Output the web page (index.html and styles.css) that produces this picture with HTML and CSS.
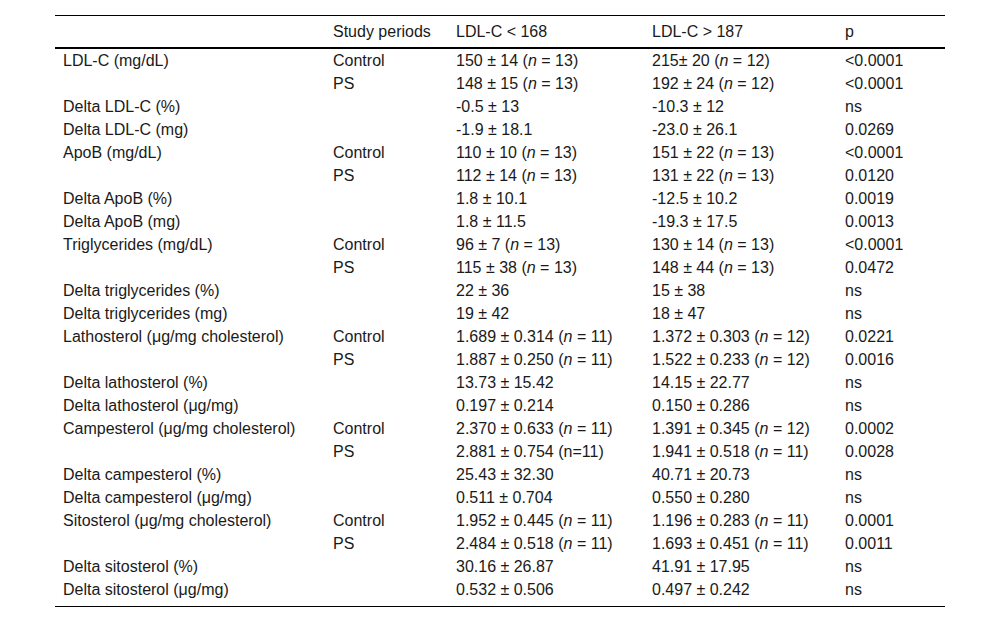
FILE: index.html
```html
<!DOCTYPE html>
<html>
<head>
<meta charset="utf-8">
<link rel="stylesheet" href="styles.css">
</head>
<body>
<table class="data">
<colgroup>
<col class="c1"><col class="c2"><col class="c3"><col class="c4"><col class="c5">
</colgroup>
<thead>
<tr><th></th><th>Study periods</th><th>LDL-C &lt; 168</th><th>LDL-C &gt; 187</th><th>p</th></tr>
</thead>
<tbody>
<tr><td>LDL-C (mg/dL)</td><td>Control</td><td>150 ± 14 (<i>n</i> = 13)</td><td>215± 20 (<i>n</i> = 12)</td><td>&lt;0.0001</td></tr>
<tr><td></td><td>PS</td><td>148 ± 15 (<i>n</i> = 13)</td><td>192 ± 24 (<i>n</i> = 12)</td><td>&lt;0.0001</td></tr>
<tr><td>Delta LDL-C (%)</td><td></td><td>-0.5 ± 13</td><td>-10.3 ± 12</td><td>ns</td></tr>
<tr><td>Delta LDL-C (mg)</td><td></td><td>-1.9 ± 18.1</td><td>-23.0 ± 26.1</td><td>0.0269</td></tr>
<tr><td>ApoB (mg/dL)</td><td>Control</td><td>110 ± 10 (<i>n</i> = 13)</td><td>151 ± 22 (<i>n</i> = 13)</td><td>&lt;0.0001</td></tr>
<tr><td></td><td>PS</td><td>112 ± 14 (<i>n</i> = 13)</td><td>131 ± 22 (<i>n</i> = 13)</td><td>0.0120</td></tr>
<tr><td>Delta ApoB (%)</td><td></td><td>1.8 ± 10.1</td><td>-12.5 ± 10.2</td><td>0.0019</td></tr>
<tr><td>Delta ApoB (mg)</td><td></td><td>1.8 ± 11.5</td><td>-19.3 ± 17.5</td><td>0.0013</td></tr>
<tr><td>Triglycerides (mg/dL)</td><td>Control</td><td>96 ± 7 (<i>n</i> = 13)</td><td>130 ± 14 (<i>n</i> = 13)</td><td>&lt;0.0001</td></tr>
<tr><td></td><td>PS</td><td>115 ± 38 (<i>n</i> = 13)</td><td>148 ± 44 (<i>n</i> = 13)</td><td>0.0472</td></tr>
<tr><td>Delta triglycerides (%)</td><td></td><td>22 ± 36</td><td>15 ± 38</td><td>ns</td></tr>
<tr><td>Delta triglycerides (mg)</td><td></td><td>19 ± 42</td><td>18 ± 47</td><td>ns</td></tr>
<tr><td>Lathosterol (μg/mg cholesterol)</td><td>Control</td><td>1.689 ± 0.314 (<i>n</i> = 11)</td><td>1.372 ± 0.303 (<i>n</i> = 12)</td><td>0.0221</td></tr>
<tr><td></td><td>PS</td><td>1.887 ± 0.250 (<i>n</i> = 11)</td><td>1.522 ± 0.233 (<i>n</i> = 12)</td><td>0.0016</td></tr>
<tr><td>Delta lathosterol (%)</td><td></td><td>13.73 ± 15.42</td><td>14.15 ± 22.77</td><td>ns</td></tr>
<tr><td>Delta lathosterol (μg/mg)</td><td></td><td>0.197 ± 0.214</td><td>0.150 ± 0.286</td><td>ns</td></tr>
<tr><td>Campesterol (μg/mg cholesterol)</td><td>Control</td><td>2.370 ± 0.633 (<i>n</i> = 11)</td><td>1.391 ± 0.345 (<i>n</i> = 12)</td><td>0.0002</td></tr>
<tr><td></td><td>PS</td><td>2.881 ± 0.754 (n=11)</td><td>1.941 ± 0.518 (<i>n</i> = 11)</td><td>0.0028</td></tr>
<tr><td>Delta campesterol (%)</td><td></td><td>25.43 ± 32.30</td><td>40.71 ± 20.73</td><td>ns</td></tr>
<tr><td>Delta campesterol (μg/mg)</td><td></td><td>0.511 ± 0.704</td><td>0.550 ± 0.280</td><td>ns</td></tr>
<tr><td>Sitosterol (μg/mg cholesterol)</td><td>Control</td><td>1.952 ± 0.445 (<i>n</i> = 11)</td><td>1.196 ± 0.283 (<i>n</i> = 11)</td><td>0.0001</td></tr>
<tr><td></td><td>PS</td><td>2.484 ± 0.518 (<i>n</i> = 11)</td><td>1.693 ± 0.451 (<i>n</i> = 11)</td><td>0.0011</td></tr>
<tr><td>Delta sitosterol (%)</td><td></td><td>30.16 ± 26.87</td><td>41.91 ± 17.95</td><td>ns</td></tr>
<tr class="last"><td>Delta sitosterol (μg/mg)</td><td></td><td>0.532 ± 0.506</td><td>0.497 ± 0.242</td><td>ns</td></tr>
</tbody>
</table>
</body>
</html>
```

FILE: styles.css
```css
html, body {
  margin: 0;
  padding: 0;
  background: #fff;
}
body {
  font-family: "Liberation Sans", Arial, sans-serif;
  font-size: 16px;
  color: #1a1a1a;
}
.data {
  margin: 15px 0 0 55px;
  width: 890px;
  border-collapse: collapse;
  table-layout: fixed;
  border-top: 1px solid #000;
  border-bottom: 1px solid #000;
}
.c1 { width: 270px; }
.c2 { width: 123px; }
.c3 { width: 196px; }
.c4 { width: 193px; }
.c5 { width: 108px; }
.data th {
  font-weight: normal;
  text-align: left;
  padding: 4px 8px 4px 8px;
  line-height: 23px;
  border-bottom: 2px solid #000;
  white-space: nowrap;
}
.data td {
  padding: 0 8px;
  height: 23px;
  line-height: 23px;
  white-space: nowrap;
  vertical-align: middle;
}
.data tr.last td {
  padding-bottom: 5px;
  vertical-align: top;
}
```
